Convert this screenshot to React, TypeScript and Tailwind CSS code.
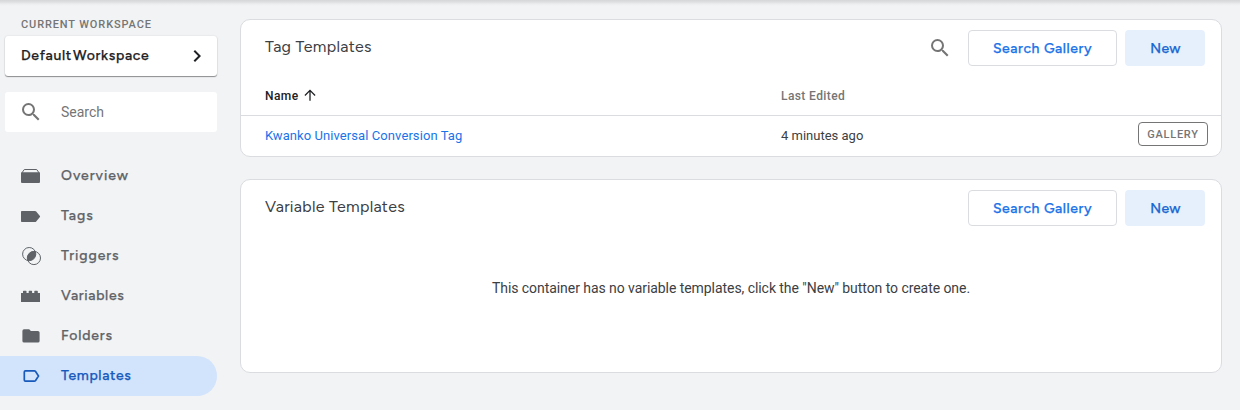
import type { ReactNode } from 'react';

const display = "font-['Figtree','Google_Sans','Lato',sans-serif]";

function SearchIcon() {
  return (
    <svg width="24" height="24" viewBox="0 0 24 24" fill="#757575" className="shrink-0">
      <path d="M15.5 14h-.79l-.28-.27A6.471 6.471 0 0 0 16 9.5 6.5 6.5 0 1 0 9.5 16c1.61 0 3.09-.59 4.23-1.57l.27.28v.79l5 4.99L20.49 19l-4.99-5zm-6 0C7.01 14 5 11.99 5 9.5S7.01 5 9.5 5 14 7.01 14 9.5 11.99 14 9.5 14z" />
    </svg>
  );
}

const icons: Record<string, ReactNode> = {
  Overview: (
    <>
      <path d="M1.8 9 4.3 5.5h12.400l2.500 3.500" fill="none" stroke="currentColor" />
      <path d="M1 9.200a1 1 0 0 1 1-1h17a1 1 0 0 1 1 1v8.800a1 1 0 0 1-1 1H2a1 1 0 0 1-1-1z" />
    </>
  ),
  Tags: <path d="M1.8 7H15a1.6 1.6 0 0 1 1.2.5l3.700 4.400a1 1 0 0 1 0 1.200l-3.700 4.400a1.6 1.6 0 0 1-1.2.5H1.8a.8.8 0 0 1-.8-.8V7.8a.8.8 0 0 1 .8-.8z" />,
  Triggers: (
    <>
      <circle cx="9.200" cy="10.100" r="6.600" fill="none" stroke="currentColor" />
      <circle cx="13.900" cy="14" r="6.600" fill="none" stroke="currentColor" />
      <path d="M15.300 7.550A6.6 6.6 0 0 1 7.800 16.550 6.6 6.6 0 0 1 15.300 7.550z" />
    </>
  ),
  Variables: <path d="M1 9h2V7.3a.6.6 0 0 1 .6-.6h2.3a.6.6 0 0 1 .6.6V9h2.2V7.3a.6.6 0 0 1 .6-.6h2.2a.6.6 0 0 1 .6.6V9h2.2V7.3a.6.6 0 0 1 .6-.6h2.3a.6.6 0 0 1 .6.6V9H20v9H1z" />,
  Folders: <path d="M9.200 5.300H4a1.6 1.6 0 0 0-1.6 1.6v10a1.7 1.7 0 0 0 1.7 1.7h13.8a1.7 1.7 0 0 0 1.7-1.7V8.6A1.7 1.7 0 0 0 17.900 7H10.900z" />,
  Templates: (
    <path d="M5.400 6.900h8.900c.6 0 1 .2 1.300.6l2.900 4.500-2.900 4.500c-.3.400-.7.600-1.300.600H5.400a1.100 1.100 0 0 1-1.100-1.100V8a1.100 1.100 0 0 1 1.100-1.100z" fill="none" stroke="currentColor" strokeWidth="1.700" />
  ),
};

const nav = [
  { name: 'Overview', spacing: 'tracking-[0.97px]' },
  { name: 'Tags', spacing: 'tracking-[0.9px]' },
  { name: 'Triggers', spacing: 'tracking-[0.92px]' },
  { name: 'Variables', spacing: 'tracking-[0.65px]' },
  { name: 'Folders', spacing: 'tracking-[0.8px]' },
  { name: 'Templates', spacing: 'tracking-[0.6px]' },
];

function Sidebar() {
  return (
    <aside className="w-[217px] shrink-0 pt-[17px]">
      <div className="h-[19px] pl-[21px] text-[11px] leading-4 font-medium tracking-[0.88px] text-[#757575]">CURRENT WORKSPACE</div>
      <button className="ml-[5px] flex h-10 w-[212px] items-center justify-between rounded-[3px] bg-white pr-2 pl-4 shadow-[0_1px_1px_rgba(0,0,0,0.4),0_0_2px_rgba(0,0,0,0.12)]">
        <span className={`${display} text-[14px] leading-5 font-medium tracking-[0.68px] whitespace-nowrap text-[#202124] [-webkit-text-stroke:0.25px] [word-spacing:-3px]`}>Default Workspace</span>
        <svg width="24" height="24" viewBox="0 0 24 24" fill="#202124">
          <path d="M10 6 8.590 7.410 13.170 12l-4.580 4.590L10 18l6-6z" />
        </svg>
      </button>
      <div className="mt-4 ml-[5px] flex h-10 w-[212px] items-center gap-4 rounded-[3px] bg-white pl-[14px]">
        <SearchIcon />
        <span className="pl-[2px] text-[14px] text-[#757575]">Search</span>
      </div>
      <nav className="mt-6">
        {nav.map(({ name, spacing }) => (
          <a
            key={name}
            className={`flex h-10 items-center pl-5 ${name === 'Templates' ? 'rounded-r-full bg-[#d2e3fc] text-[#185abc]' : 'text-[#5f6368]'}`}
          >
            <svg width="24" height="24" viewBox="0 0 24 24" fill="currentColor" className="mr-[17px] shrink-0">
              {icons[name]}
            </svg>
            <span className={`${display} ${spacing} pb-px text-[14px] leading-5 font-medium [-webkit-text-stroke:0.25px]`}>{name}</span>
          </a>
        ))}
      </nav>
    </aside>
  );
}

function Actions() {
  return (
    <div className={`${display} flex gap-2 text-[14px] font-medium [-webkit-text-stroke:0.25px]`}>
      <button className="h-9 w-[149px] rounded-[4px] border border-[#dadce0] tracking-[0.55px] whitespace-nowrap text-[#1a73e8]">Search Gallery</button>
      <button className="h-9 w-20 rounded-[4px] bg-[#e6f0fd] pl-px tracking-[0.4px] text-[#1967d2]">New</button>
    </div>
  );
}

export default function App() {
  return (
    <div className="h-[410px] overflow-hidden bg-[#f1f3f4] bg-[linear-gradient(to_bottom,#d4d6d7_0px,#dddfe0_2px,#ebedee_4px,#f1f3f4_6px)] font-['Roboto',sans-serif]">
      <div className="flex gap-[23px]">
        <Sidebar />
        <main className="w-[982px] pt-[19px]">
          <section className="h-[138px] rounded-[10px] border border-[#dadce0] bg-white">
            <header className="flex h-[56px] items-start pt-[10px] pr-4 pl-6">
              <h2 className={`${display} mr-auto pt-[5px] text-[16px] leading-6 tracking-[0.3px] text-[#3c4043]`}>Tag Templates</h2>
              <span className="mt-[6px] mr-[16px]"><SearchIcon /></span>
              <Actions />
            </header>
            <div className="flex h-10 items-center border-b border-[#dadce0] pl-6 text-[12px] font-medium">
              <div className="flex w-[516px] items-center gap-1 tracking-[0.4px] text-[#202124]">
                <span>Name</span>
                <svg width="16" height="16" viewBox="0 0 16 16" fill="none" stroke="#202124" strokeWidth="1.300">
                  <path d="M8 12.800V2.600M2.900 7.500 8 2.400 13.100 7.500" />
                </svg>
              </div>
              <span className="tracking-[0.4px] text-[#757575]">Last Edited</span>
            </div>
            <div className="flex h-10 items-center pr-[13px] pl-6 text-[13px]">
              <a className="w-[516px] tracking-[0.08px] text-[#1a73e8]">Kwanko Universal Conversion Tag</a>
              <span className="text-[#3c4043]">4 minutes ago</span>
              <span className="mb-1 ml-auto flex h-6 w-[70px] items-center justify-center rounded-[4px] border border-[#757575] pt-[2px] text-[11px] font-medium tracking-[0.75px] text-[#757575]">GALLERY</span>
            </div>
          </section>
          <section className="mt-[22px] h-[194px] rounded-[10px] border border-[#dadce0] bg-white">
            <header className="flex h-[56px] items-start pt-[10px] pr-4 pl-6">
              <h2 className={`${display} mr-auto pt-[5px] text-[16px] leading-6 tracking-[0.27px] text-[#3c4043]`}>Variable Templates</h2>
              <Actions />
            </header>
            <p className="mt-[42px] text-center text-[14px] leading-5 tracking-[-0.06px] text-[#3c4043]">This container has no variable templates, click the "New" button to create one.</p>
          </section>
        </main>
      </div>
    </div>
  );
}
